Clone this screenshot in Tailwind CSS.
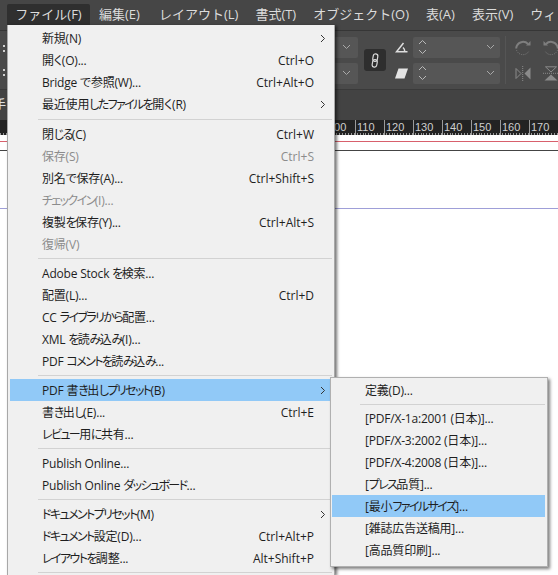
<!DOCTYPE html>
<html lang="ja">
<head>
<meta charset="utf-8">
<script src="https://cdn.jsdelivr.net/npm/@tailwindcss/browser@4"></script>
</head>
<body class="m-0 bg-white">
<div class="relative w-[558px] h-[575px] overflow-hidden bg-white font-['Open_Sans','Noto_Sans_CJK_JP',sans-serif] text-[12px] text-[#1e1e1e]">

  <!-- menu bar -->
  <div class="h-[31px] bg-[#464646] border-b border-[#363636] flex items-start pt-[4px] pl-[7px] text-[13px] text-[#dcdcdc] whitespace-nowrap overflow-hidden">
    <div class="shrink-0 h-[21px] w-[83px] bg-[#2f2f2f] flex items-center justify-center rounded-t-[2px]">ファイル(F)</div>
    <div class="shrink-0 h-[21px] flex items-center pl-[9px]">編集(E)</div>
    <div class="shrink-0 h-[21px] flex items-center pl-[19px]">レイアウト(L)</div>
    <div class="shrink-0 h-[21px] flex items-center pl-[17px]">書式(T)</div>
    <div class="shrink-0 h-[21px] flex items-center pl-[17px]">オブジェクト(O)</div>
    <div class="shrink-0 h-[21px] flex items-center pl-[17px]">表(A)</div>
    <div class="shrink-0 h-[21px] flex items-center pl-[17px]">表示(V)</div>
    <div class="shrink-0 h-[21px] flex items-center pl-[17px]">ウィンドウ(W)</div>
  </div>

  <!-- control bar -->
  <div class="h-[59px] bg-[#4a4a4a] border-b border-[#3a3a3a] flex items-center pl-[2px] overflow-hidden">
    <div class="w-[333px] shrink-0 flex flex-col gap-[17px] items-start pl-[1px] text-[#d0d0d0] leading-none">
      <span class="w-[2px] h-[7px] border-y-2 border-[#d0d0d0]"></span>
      <span class="w-[2px] h-[7px] border-y-2 border-[#d0d0d0]"></span>
    </div>
    <div class="w-[23px] shrink-0 flex flex-col gap-[5px]">
      <div class="h-[21px] bg-[#565656] rounded-r-[2px] flex items-center justify-center"><svg width="9" height="6" viewBox="0 0 9 6"><path d="M1 1l3.5 3.5L8 1" fill="none" stroke="#a8a8a8"/></svg></div>
      <div class="h-[21px] bg-[#565656] rounded-r-[2px] flex items-center justify-center"><svg width="9" height="6" viewBox="0 0 9 6"><path d="M1 1l3.5 3.5L8 1" fill="none" stroke="#a8a8a8"/></svg></div>
    </div>
    <div class="w-[22px] h-[22px] ml-[6px] shrink-0 bg-[#2e2e2e] rounded-[3px] flex items-center justify-center">
      <svg width="8" height="15" viewBox="0 0 8 15" fill="none" stroke="#d8d8d8" stroke-width="1.2"><rect x="2" y="0.8" width="4.6" height="7.6" rx="2.3" transform="rotate(10 4 4.5)"/><rect x="1.4" y="6.6" width="4.6" height="7.6" rx="2.3" transform="rotate(10 4 10.5)"/></svg>
    </div>
    <div class="w-[13px] ml-[9px] shrink-0 flex flex-col gap-[15px] items-center">
      <svg width="13" height="11" viewBox="0 0 13 11" fill="none" stroke="#dedede" stroke-width="1.5"><path d="M8.5 1L1.5 9.8H12.5M8 5.5Q9.8 7 9.8 9.8"/></svg>
      <svg width="13" height="11" viewBox="0 0 13 11"><path d="M3.5 0.5H13L9.5 10.5H0Z" fill="#e4e4e4"/></svg>
    </div>
    <div class="w-[87px] ml-[5px] shrink-0 flex flex-col gap-[5px]">
      <div class="h-[21px] bg-[#565656] rounded-[2px] flex items-center justify-between px-[5px]">
        <svg width="9" height="16" viewBox="0 0 9 16" fill="none" stroke="#b8b8b8"><path d="M1 5l3.5-3.5L8 5M1 11l3.5 3.5L8 11"/></svg>
        <svg width="9" height="6" viewBox="0 0 9 6"><path d="M1 1l3.5 3.5L8 1" fill="none" stroke="#a8a8a8"/></svg>
      </div>
      <div class="h-[21px] bg-[#565656] rounded-[2px] flex items-center justify-between px-[5px]">
        <svg width="9" height="16" viewBox="0 0 9 16" fill="none" stroke="#b8b8b8"><path d="M1 5l3.5-3.5L8 5M1 11l3.5 3.5L8 11"/></svg>
        <svg width="9" height="6" viewBox="0 0 9 6"><path d="M1 1l3.5 3.5L8 1" fill="none" stroke="#a8a8a8"/></svg>
      </div>
    </div>
    <div class="w-px h-[48px] ml-[5px] bg-[#555555] shrink-0"></div>
    <div class="ml-[9px] shrink-0 grid grid-cols-[16px_16px] gap-x-[12px] gap-y-[9px]">
      <svg width="16" height="17" viewBox="0 0 16 17" fill="none" stroke="#7e7e7e" stroke-width="2"><path d="M13 4A6.8 6.8 0 0 0 2 5.5Q1.2 7 1.2 8.5"/><path d="M11 5.5h4.5V1" stroke-width="0" fill="#7e7e7e"/><path d="M1.5 10A6.8 6.8 0 0 0 14 11" stroke-width="1" stroke-dasharray="1 1.2"/></svg>
      <svg width="16" height="17" viewBox="0 0 16 17" fill="none" stroke="#7e7e7e" stroke-width="2"><path d="M3 4A6.8 6.8 0 0 1 14 5.5Q14.8 7 14.8 8.5"/><path d="M5 5.5H0.5V1" stroke-width="0" fill="#7e7e7e"/><path d="M14.5 10A6.8 6.8 0 0 1 2 11" stroke-width="1" stroke-dasharray="1 1.2"/></svg>
      <svg width="16" height="15" viewBox="0 0 16 15"><path d="M1 2.5L6 7.5L1 12.5Z" fill="none" stroke="#8a8a8a"/><path d="M15.5 1.5V13.5L9.5 7.5Z" fill="#8a8a8a"/><path d="M7.7 0V15" stroke="#8a8a8a" stroke-dasharray="1 1"/></svg>
      <svg width="16" height="15" viewBox="0 0 16 15"><path d="M2.5 0.8H13.5L8 6Z" fill="none" stroke="#8a8a8a"/><path d="M1.5 14.5H14.5L8 8.5Z" fill="#8a8a8a"/><path d="M0 7.3H16" stroke="#8a8a8a" stroke-dasharray="1 1"/></svg>
    </div>
  </div>

  <!-- tab bar -->
  <div class="h-[30px] bg-[#434343] flex items-center text-[#e0e0e0] text-[12px] overflow-hidden">
    <span class="-ml-[6px]">手</span>
  </div>

  <!-- ruler -->
  <div class="h-[15px] bg-[#232323] pl-[326px] relative overflow-hidden">
    <div class="flex text-[11px] leading-[14px] text-[#cfcfcf] font-['Liberation_Sans',sans-serif] h-[15px]">
      <div class="w-[29px] shrink-0 border-l border-[#9a9a9a] pl-[1px]">100</div>
      <div class="w-[29px] shrink-0 border-l border-[#9a9a9a] pl-[1px]">110</div>
      <div class="w-[29px] shrink-0 border-l border-[#9a9a9a] pl-[1px]">120</div>
      <div class="w-[29px] shrink-0 border-l border-[#9a9a9a] pl-[1px]">130</div>
      <div class="w-[29px] shrink-0 border-l border-[#9a9a9a] pl-[1px]">140</div>
      <div class="w-[29px] shrink-0 border-l border-[#9a9a9a] pl-[1px]">150</div>
      <div class="w-[29px] shrink-0 border-l border-[#9a9a9a] pl-[1px]">160</div>
      <div class="w-[29px] shrink-0 border-l border-[#9a9a9a] pl-[1px]">170</div>
      <div class="w-[29px] shrink-0 border-l border-[#9a9a9a]"></div>
    </div>
    <div class="absolute left-0 right-0 bottom-0 h-[2px] bg-[repeating-linear-gradient(90deg,#9a9a9a_0,#9a9a9a_1px,transparent_1px,transparent_2.9px)]"></div>
  </div>

  <!-- page canvas -->
  <div class="pt-[6px] flex flex-col">
    <div class="h-px bg-[#d8606c]"></div>
    <div class="h-px mt-[8px] bg-[#444444]"></div>
    <div class="h-px mt-[57px] bg-[#9f9fd8]"></div>
  </div>

  <!-- file menu -->
  <div class="absolute left-[7px] top-[25px] w-[328px] h-[550px] overflow-hidden bg-[#f0f0f0] border-l border-r border-[#a8a8a8] shadow-[2px_1px_3px_rgba(0,0,0,0.55)] pt-[2px] pl-[2px] pr-[2px] whitespace-nowrap [font-feature-settings:'palt']">
    <div class="h-[22px] flex items-center pl-[32px] pt-px"><span class="flex-1 tracking-[-0.2px]">新規(N)</span><span class="w-[18px] flex justify-center"><svg width="6" height="9" viewBox="0 0 6 9"><path d="M1 1l3.5 3.5L1 8" fill="none" stroke="#333"/></svg></span></div>
    <div class="h-[22px] flex items-center pl-[32px] pt-px"><span class="flex-1 tracking-[-0.2px]">開く(O)...</span><span>Ctrl+O</span><span class="w-[18px]"></span></div>
    <div class="h-[22px] flex items-center pl-[32px] pt-px"><span class="flex-1 tracking-[-0.2px]">Bridge で参照(W)...</span><span>Ctrl+Alt+O</span><span class="w-[18px]"></span></div>
    <div class="h-[22px] flex items-center pl-[32px] pt-px"><span class="flex-1 tracking-[-0.2px]">最近使用<span class="tracking-[-1.6px]">したファイルを</span>開く(R)</span><span class="w-[18px] flex justify-center"><svg width="6" height="9" viewBox="0 0 6 9"><path d="M1 1l3.5 3.5L1 8" fill="none" stroke="#333"/></svg></span></div>
    <div class="h-[8px] flex items-center pl-[28px]"><div class="h-px w-full bg-[#d2d2d2]"></div></div>

    <div class="h-[22px] flex items-center pl-[32px] pt-px"><span class="flex-1 tracking-[-0.2px]">閉<span class="tracking-[-1.6px]">じる</span>(C)</span><span>Ctrl+W</span><span class="w-[18px]"></span></div>
    <div class="h-[22px] flex items-center pl-[32px] pt-px text-[#8c8c8c]"><span class="flex-1 tracking-[-0.2px]">保存(S)</span><span>Ctrl+S</span><span class="w-[18px]"></span></div>
    <div class="h-[22px] flex items-center pl-[32px] pt-px"><span class="flex-1 tracking-[-0.2px]">別名で保存(A)...</span><span>Ctrl+Shift+S</span><span class="w-[18px]"></span></div>
    <div class="h-[22px] flex items-center pl-[32px] pt-px text-[#8c8c8c]"><span class="flex-1 tracking-[-0.2px]"><span class="tracking-[-1.6px]">チェックイン</span>(I)...</span></div>
    <div class="h-[22px] flex items-center pl-[32px] pt-px"><span class="flex-1 tracking-[-0.2px]">複製<span class="tracking-[-1.6px]">を</span>保存(Y)...</span><span>Ctrl+Alt+S</span><span class="w-[18px]"></span></div>
    <div class="h-[22px] flex items-center pl-[32px] pt-px text-[#8c8c8c]"><span class="flex-1 tracking-[-0.2px]">復帰(V)</span></div>
    <div class="h-[7px] flex items-center pl-[28px]"><div class="h-px w-full bg-[#d2d2d2]"></div></div>

    <div class="h-[22px] flex items-center pl-[32px] pt-px"><span class="flex-1 tracking-[-0.2px]">Adobe Stock <span class="tracking-[-1.6px]">を</span>検索...</span></div>
    <div class="h-[22px] flex items-center pl-[32px] pt-px"><span class="flex-1 tracking-[-0.2px]">配置(L)...</span><span>Ctrl+D</span><span class="w-[18px]"></span></div>
    <div class="h-[22px] flex items-center pl-[32px] pt-px"><span class="flex-1 tracking-[-0.2px]">CC <span class="tracking-[-1.6px]">ライブラリから</span>配置...</span></div>
    <div class="h-[22px] flex items-center pl-[32px] pt-px"><span class="flex-1 tracking-[-0.2px]">XML <span class="tracking-[-1.6px]">を</span>読<span class="tracking-[-1.6px]">み</span>込<span class="tracking-[-1.6px]">み</span>(I)...</span></div>
    <div class="h-[22px] flex items-center pl-[32px] pt-px"><span class="flex-1 tracking-[-0.2px]">PDF <span class="tracking-[-1.6px]">コメントを</span>読<span class="tracking-[-1.6px]">み</span>込<span class="tracking-[-1.6px]">み</span>...</span></div>
    <div class="h-[7px] flex items-center pl-[28px]"><div class="h-px w-full bg-[#d2d2d2]"></div></div>

    <div class="h-[22px] flex items-center pl-[32px] pt-px bg-[#91c9f7]"><span class="flex-1 tracking-[-0.2px]">PDF 書<span class="tracking-[-1.6px]">き</span>出<span class="tracking-[-1.6px]">しプリセット</span>(B)</span><span class="w-[18px] flex justify-center"><svg width="6" height="9" viewBox="0 0 6 9"><path d="M1 1l3.5 3.5L1 8" fill="none" stroke="#333"/></svg></span></div>
    <div class="h-[22px] flex items-center pl-[32px] pt-px"><span class="flex-1 tracking-[-0.2px]">書<span class="tracking-[-1.6px]">き</span>出<span class="tracking-[-1.6px]">し</span>(E)...</span><span>Ctrl+E</span><span class="w-[18px]"></span></div>
    <div class="h-[22px] flex items-center pl-[32px] pt-px"><span class="flex-1 tracking-[-0.2px]"><span class="tracking-[-1.6px]">レビュー</span>用<span class="tracking-[-1.6px]">に</span>共有...</span></div>
    <div class="h-[7px] flex items-center pl-[28px]"><div class="h-px w-full bg-[#d2d2d2]"></div></div>

    <div class="h-[22px] flex items-center pl-[32px] pt-px"><span class="flex-1 tracking-[-0.2px]">Publish Online...</span></div>
    <div class="h-[22px] flex items-center pl-[32px] pt-px"><span class="flex-1 tracking-[-0.2px]">Publish Online <span class="tracking-[-1.6px]">ダッシュボード</span>...</span></div>
    <div class="h-[7px] flex items-center pl-[28px]"><div class="h-px w-full bg-[#d2d2d2]"></div></div>

    <div class="h-[22px] flex items-center pl-[32px] pt-px"><span class="flex-1 tracking-[-0.2px]"><span class="tracking-[-1.6px]">ドキュメントプリセット</span>(M)</span><span class="w-[18px] flex justify-center"><svg width="6" height="9" viewBox="0 0 6 9"><path d="M1 1l3.5 3.5L1 8" fill="none" stroke="#333"/></svg></span></div>
    <div class="h-[22px] flex items-center pl-[32px] pt-px"><span class="flex-1 tracking-[-0.2px]"><span class="tracking-[-1.6px]">ドキュメント</span>設定(D)...</span><span>Ctrl+Alt+P</span><span class="w-[18px]"></span></div>
    <div class="h-[22px] flex items-center pl-[32px] pt-px"><span class="flex-1 tracking-[-0.2px]"><span class="tracking-[-1.6px]">レイアウトを</span>調整...</span><span>Alt+Shift+P</span><span class="w-[18px]"></span></div>
    <div class="h-[7px] flex items-center pl-[28px]"><div class="h-px w-full bg-[#d2d2d2]"></div></div>
  </div>

  <!-- submenu -->
  <div class="absolute left-[330px] top-[377px] w-[218px] h-[190px] bg-[#f0f0f0] border border-[#b0b0b0] shadow-[2px_2px_3px_rgba(0,0,0,0.5)] pt-[1px] pl-[1px] pr-[2px] whitespace-nowrap tracking-[-0.2px] [font-feature-settings:'palt']">
    <div class="h-[22px] flex items-center pl-[33px] pt-px">定義(D)...</div>
    <div class="h-[6px] flex items-center pl-[28px]"><div class="h-px w-full bg-[#d2d2d2]"></div></div>
    <div class="h-[22px] flex items-center pl-[33px] pt-px">[PDF/X-1a:2001 (日本)]...</div>
    <div class="h-[22px] flex items-center pl-[33px] pt-px">[PDF/X-3:2002 (日本)]...</div>
    <div class="h-[22px] flex items-center pl-[33px] pt-px">[PDF/X-4:2008 (日本)]...</div>
    <div class="h-[22px] flex items-center pl-[33px] pt-px"><span>[<span class="tracking-[-1.6px]">プレス</span>品質]...</span></div>
    <div class="h-[22px] flex items-center pl-[33px] pt-px bg-[#91c9f7]"><span>[最小<span class="tracking-[-1.6px]">ファイルサイズ</span>]...</span></div>
    <div class="h-[22px] flex items-center pl-[33px] pt-px">[雑誌広告送稿用]...</div>
    <div class="h-[22px] flex items-center pl-[33px] pt-px">[高品質印刷]...</div>
  </div>
</div>
</body>
</html>
